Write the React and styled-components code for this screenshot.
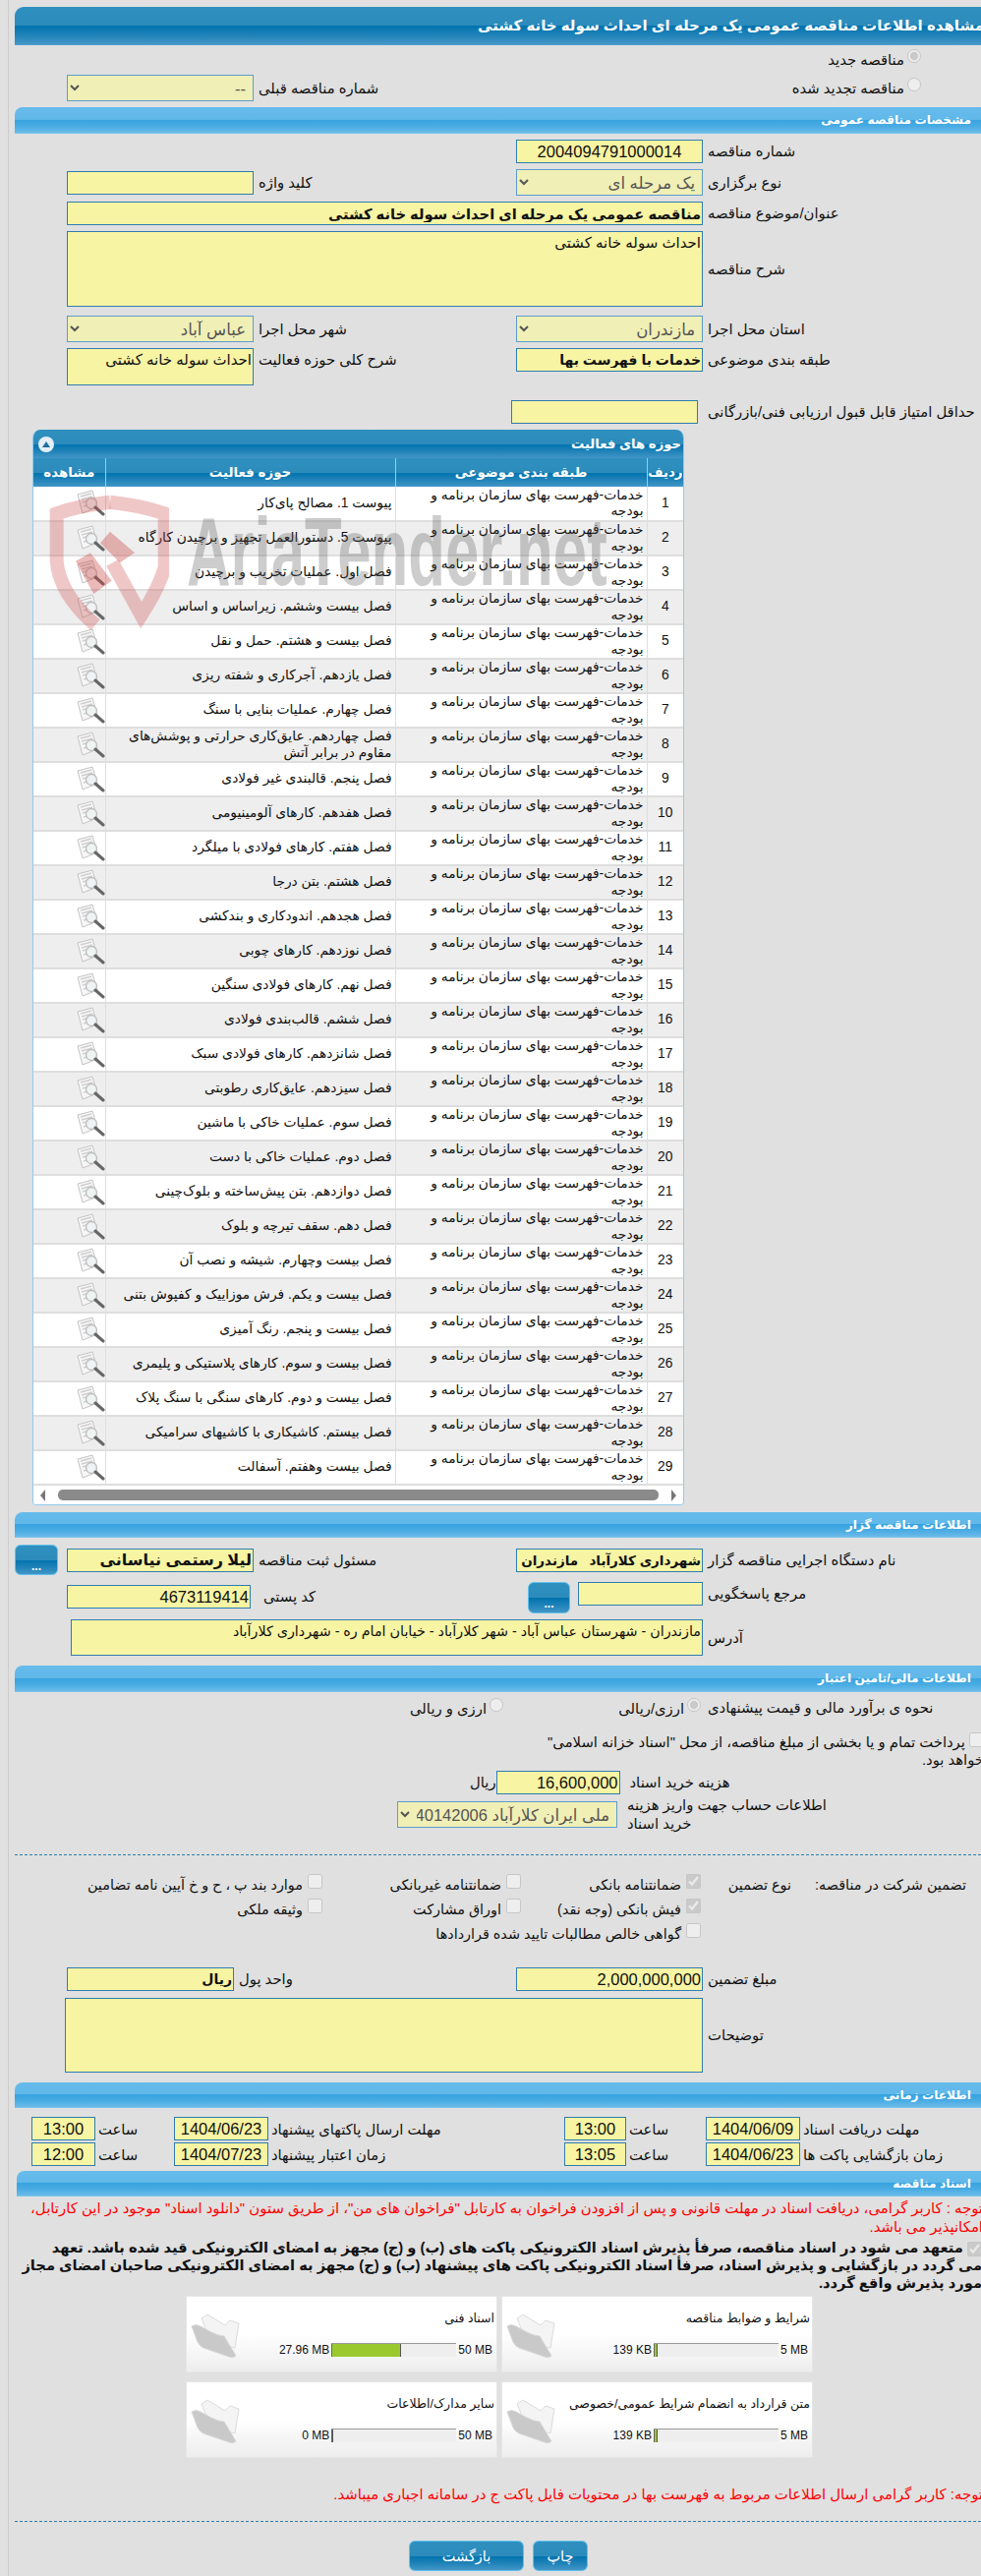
import styled, { createGlobalStyle } from 'styled-components'

const GlobalStyle = createGlobalStyle`
    html, body {
        margin: 0;
        padding: 0;
        background: #e0e0e0;
    }
    body {
        font-family: "Liberation Sans", "DejaVu Sans", sans-serif;
        font-size: 13px;
        color: #111;
        overflow: hidden;
    }
    * {
        box-sizing: border-box;
    }
`

const darkGradient = 'linear-gradient(to bottom, #2f90c0 0%, #2c8bbb 50%, #0073ae 51%, #1f82b8 75%, #4296c6 100%)'
const lightGradient = 'linear-gradient(to bottom, #66bbea 0%, #60b8e9 48%, #38a3e0 50%, #4aace3 75%, #6bbbe9 100%)'

const Page = styled.div`
    width: 998px;
    height: 2620px;
    overflow: hidden;
    position: relative;
`

const Rule = styled.div`
    position: absolute;
    left: 8px;
    top: 0;
    bottom: 0;
    width: 1px;
    background: #cdcdcd;
`

const Content = styled.div`
    margin-left: 15px;
    width: 983px;
    padding-top: 7px;
`

const MainHeader = styled.div`
    height: 39px;
    background: ${darkGradient};
    border-top-left-radius: 9px;
    border-bottom: 1px solid #4f9fd0;
    color: #fff;
    font-weight: bold;
    font-size: 15px;
    line-height: 38px;
    direction: rtl;
    white-space: nowrap;
    overflow: hidden;
    span {
        margin-right: -3px;
    }
`

const SectionHeader = styled.div`
    height: ${props => props.$height || 27}px;
    margin-top: ${props => props.$mt || 0}px;
    margin-left: ${props => props.$ml || 0}px;
    background: ${lightGradient};
    border-top-left-radius: 8px;
    border-bottom: 1px solid #7cc4ec;
    color: #fff;
    font-weight: bold;
    font-size: 12.2px;
    line-height: 26px;
    direction: rtl;
    padding-right: 10px;
`

const FieldRow = styled.div`
    display: grid;
    grid-template-columns: 53px 190px 267px 190px 1fr;
    align-items: ${props => props.$align || 'start'};
    margin-top: ${props => props.$mt || 0}px;
    min-height: ${props => props.$height || 0}px;
`

const Gutter = styled.div`
    min-width: 0;
`

const Label = styled.div`
    direction: rtl;
    text-align: left;
    padding-left: ${props => props.$pl ?? 5}px;
    padding-top: ${props => props.$pt ?? 0}px;
    margin-left: ${props => props.$ml || 0}px;
    margin-top: ${props => props.$mt || 0}px;
    width: ${props => props.$width ? props.$width + 'px' : 'auto'};
    font-size: 14.8px;
    line-height: ${props => props.$lh || 24}px;
    white-space: ${props => props.$wrap ? 'normal' : 'nowrap'};
    align-self: ${props => props.$self || 'auto'};
`

const Box = styled.input`
    display: block;
    width: ${props => props.$width ? props.$width + 'px' : '100%'};
    height: ${props => props.$height || 24}px;
    margin: ${props => props.$margin || 0};
    padding: 0 1px;
    background: #f7f4a3;
    border: 1px solid #2f7db0;
    border-radius: 0;
    outline: none;
    direction: rtl;
    color: #111;
    font-family: inherit;
    font-size: ${props => props.$size || 16.5}px;
    font-weight: ${props => props.$bold ? 'bold' : 'normal'};
    text-align: ${props => props.$center ? 'center' : 'right'};
`

const Area = styled.textarea`
    display: block;
    width: ${props => props.$width ? props.$width + 'px' : '100%'};
    height: ${props => props.$height}px;
    margin: ${props => props.$margin || 0};
    padding: 1px;
    background: #f7f4a3;
    border: 1px solid #2f7db0;
    border-radius: 0;
    outline: none;
    resize: none;
    overflow: hidden;
    direction: rtl;
    color: #111;
    font-family: inherit;
    font-size: ${props => props.$size || 15}px;
    line-height: 20px;
`

const Choice = styled.select`
    display: block;
    width: ${props => props.$width ? props.$width + 'px' : '100%'};
    height: 27px;
    padding: 0 3px;
    background-color: #f0efb5;
    border: 1px solid #5c9dcb;
    border-radius: 0;
    outline: none;
    direction: rtl;
    color: #555;
    opacity: 1;
    font-family: inherit;
    font-size: 16.5px;
`

const Wide = styled.div`
    grid-column: 2 / 5;
    min-width: 0;
`

const SideBySide = styled.div`
    display: flex;
    justify-content: flex-end;
    align-items: flex-start;
    gap: 8px;
    margin-left: ${props => props.$ml || 0}px;
`

const RadioCell = styled.label`
    display: flex;
    direction: rtl;
    align-items: flex-start;
    gap: 3px;
    width: ${props => props.$width ? props.$width + 'px' : 'auto'};
    font-size: 14.8px;
    line-height: 22px;
    white-space: nowrap;
`

const Radio = styled.input.attrs({ type: 'radio' })`
    width: 14px;
    height: 14px;
    margin: 0;
    flex: none;
`

const Tick = styled.input.attrs({ type: 'checkbox' })`
    width: 15px;
    height: 15px;
    margin: 0;
    flex: none;
`

const RightAligned = styled.div`
    width: 222px;
`

const RadioGroup = styled.div`
    grid-column: 2 / 5;
    display: flex;
    direction: rtl;
    padding-right: 2px;
`

const TableWrap = styled.div`
    position: relative;
    margin: 6px 0 0 18px;
    width: 663px;
    background: #fff;
    border: 1px solid #8fcbec;
    border-top: 0;
    border-radius: 8px 8px 4px 4px;
    overflow: hidden;
`

const TableTitle = styled.div`
    display: flex;
    direction: rtl;
    align-items: center;
    justify-content: space-between;
    height: 29px;
    padding: 0 2px 0 5px;
    background: ${darkGradient};
    color: #fff;
    font-weight: bold;
    font-size: 13.2px;
`

const Collapse = styled.span`
    display: flex;
    align-items: center;
    justify-content: center;
    width: 16px;
    height: 16px;
    border-radius: 50%;
    background: #e4eef6;
`

const Grid = styled.table`
    width: 100%;
    table-layout: fixed;
    border-collapse: collapse;
    direction: rtl;
`

const HeadCell = styled.th`
    width: ${props => props.$width ? props.$width + 'px' : 'auto'};
    height: 29px;
    padding: 0;
    background: ${darkGradient};
    border-left: 1px solid #8fd0f0;
    color: #fff;
    font-size: 13.4px;
    font-weight: bold;
    &:last-child {
        border-left: 0;
    }
`

const BodyRow = styled.tr`
    height: 35px;
    background: ${props => props.$odd ? '#fff' : '#eee'};
    border-bottom: 2px solid #dedede;
`

const Cell = styled.td`
    padding: 0 ${props => props.$pr ?? 3}px 0 3px;
    border-left: 1px solid #dedede;
    font-size: 13.8px;
    line-height: 16.5px;
    text-align: ${props => props.$center ? 'center' : 'right'};
    overflow: hidden;
    &:last-child {
        border-left: 0;
    }
`

const Mark = styled.svg`
    display: block;
    margin-left: auto;
    margin-right: 0;
`

const Watermark = styled.div`
    position: absolute;
    left: 3px;
    top: 57px;
    width: 630px;
    height: 150px;
    pointer-events: none;
`

const WatermarkText = styled.div`
    position: absolute;
    left: 153px;
    top: 12px;
    font-family: "Liberation Sans", sans-serif;
    font-size: 98px;
    font-weight: bold;
    line-height: 110px;
    white-space: nowrap;
    color: rgba(90, 90, 90, 0.3);
    transform: scaleX(0.63);
    transform-origin: left top;
`

const ScrollBar = styled.div`
    display: flex;
    align-items: center;
    justify-content: space-between;
    height: 19px;
    padding: 0 7px;
    background: #fff;
`

const Arrow = styled.span`
    width: 0;
    height: 0;
    border-top: 6px solid transparent;
    border-bottom: 6px solid transparent;
    border-right: ${props => props.$left ? '5px solid #777' : '0'};
    border-left: ${props => props.$left ? '0' : '5px solid #777'};
`

const Thumb = styled.span`
    width: 611px;
    height: 11px;
    border-radius: 5px;
    background: #8a8a8a;
`

const DotButton = styled.button`
    display: block;
    width: ${props => props.$width || 44}px;
    height: ${props => props.$height || 31}px;
    padding: ${props => props.$dots ? '12px 0 0' : '0'};
    background: ${darkGradient};
    border: 1px solid #62c0ec;
    border-radius: 6px;
    color: #fff;
    font-family: inherit;
    font-size: ${props => props.$dots ? 12 : 14.5}px;
    font-weight: ${props => props.$dots ? 'bold' : 'normal'};
`

const PayNote = styled.div`
    width: 465px;
    margin: 13px -3px 0 auto;
    direction: rtl;
    font-size: 14.8px;
    line-height: 18px;
`

const CostRow = styled.div`
    display: flex;
    align-items: flex-start;
    margin: ${props => props.$mt || 0}px 0 0 ${props => props.$ml || 0}px;
`

const Dashed = styled.div`
    margin-top: ${props => props.$mt}px;
    border-top: 1px dashed #2f7db0;
`

const GuaranteeRow = styled.div`
    display: grid;
    grid-template-columns: 178px 92px 183px 202px 1fr;
    direction: rtl;
    height: 25px;
    padding-right: 15px;
    margin-top: ${props => props.$mt || 0}px;
    font-size: 14.4px;
    line-height: 22px;
    white-space: nowrap;
`

const Option = styled.label`
    display: flex;
    align-items: flex-start;
    gap: 5px;
`

const TimeRow = styled.div`
    display: flex;
    align-items: center;
    margin: ${props => props.$mt}px 0 0 17px;
`

const TimeLabel = styled.div`
    width: ${props => props.$width}px;
    direction: rtl;
    text-align: left;
    padding-left: 3px;
    font-size: 14.8px;
    white-space: nowrap;
`

const Notice = styled.div`
    margin: ${props => props.$mt || 0}px -2px 0 ${props => props.$ml || 0}px;
    direction: rtl;
    font-size: 14.9px;
    line-height: 19px;
    color: #f00;
`

const Pledge = styled.div`
    margin: 2px -1px 0 0;
    direction: rtl;
    font-size: 14.7px;
    font-weight: bold;
    line-height: 18px;
    white-space: nowrap;
    color: #111;
    input {
        vertical-align: middle;
        margin-left: 0;
    }
`

const Cards = styled.div`
    display: grid;
    grid-template-columns: 317px 317px;
    grid-auto-rows: 78px;
    gap: 9px 4px;
    direction: rtl;
    margin: 4px 0 0 174px;
    width: 638px;
`

const Card = styled.div`
    display: flex;
    background: linear-gradient(to bottom, #fff 0%, #fff 50%, #ededed 100%);
    border: 1px solid #e6e6e6;
`

const CardBody = styled.div`
    flex: 1;
    min-width: 0;
    padding: 13px 2px 0 0;
`

const CardTitle = styled.div`
    height: 18px;
    font-size: 12.5px;
    line-height: 18px;
    white-space: nowrap;
`

const Meter = styled.div`
    display: flex;
    direction: ltr;
    justify-content: flex-end;
    align-items: center;
    gap: 2px;
    margin-top: 16px;
    padding-right: 2px;
    font-size: 12px;
    white-space: nowrap;
`

const Bar = styled.div`
    width: 127px;
    height: 14px;
    background: #eeeeee;
    border-top: 1px solid #999;
`

const Fill = styled.div`
    height: 100%;
    background: #9ac92e;
    border-left: 1px solid #666;
    border-right: 1px solid #555;
`

const Folder = styled.svg`
    flex: none;
    margin: 16px 0 0 3px;
`

const Actions = styled.div`
    display: flex;
    gap: 9px;
    margin: 19px 0 0 401px;
`

const ViewIcon = () => <Mark width="30" height="28" viewBox="0 0 30 28">
    <path d="M2 5 L17 1 L22 18 L7 24 Z" fill="#f7f7f7" stroke="#c4c4c4" />
    <path d="M5 7 L16 4 M6 10 L17 7 M7 13 L14 11 M8 17 L12 16" stroke="#cfcfcf" strokeWidth="1.4" />
    <circle cx="16" cy="14" r="5.5" fill="#eef1f2" fillOpacity="0.8" stroke="#bdbdbd" strokeWidth="1.3" />
    <path d="M20 18 L28 25" stroke="#666" strokeWidth="3" strokeLinecap="round" />
</Mark>

const FolderIcon = () => <Folder width="54" height="48" viewBox="0 0 54 48">
    <path d="M12 6 L18 2 L36 13 L41 8 L50 11 L46 36 L22 30 Z" fill="#f4f4f4" stroke="#dcdcdc" />
    <path d="M2 14 Q6 11 11 14 L22 20 Q30 24 35 24 L47 44 Q44 47 40 45 L14 36 Q10 34 8 30 Z" fill="#c9c9c9" stroke="#d8d8d8" />
</Folder>

const activities = [
    'پیوست 1. مصالح پای‌کار',
    'پیوست 5. دستورالعمل تجهیز و برچیدن کارگاه',
    'فصل اول. عملیات تخریب و برچیدن',
    'فصل بیست وششم. زیراساس و اساس',
    'فصل بیست و هشتم. حمل و نقل',
    'فصل یازدهم. آجرکاری و شفته ریزی',
    'فصل چهارم. عملیات بنایی با سنگ',
    'فصل چهاردهم. عایق‌کاری حرارتی و پوشش‌های مقاوم در برابر آتش',
    'فصل پنجم. قالبندی غیر فولادی',
    'فصل هفدهم. کارهای آلومینیومی',
    'فصل هفتم. کارهای فولادی با میلگرد',
    'فصل هشتم. بتن درجا',
    'فصل هجدهم. اندودکاری و بندکشی',
    'فصل نوزدهم. کارهای چوبی',
    'فصل نهم. کارهای فولادی سنگین',
    'فصل ششم. قالب‌بندی فولادی',
    'فصل شانزدهم. کارهای فولادی سبک',
    'فصل سیزدهم. عایق‌کاری رطوبتی',
    'فصل سوم. عملیات خاکی با ماشین',
    'فصل دوم. عملیات خاکی با دست',
    'فصل دوازدهم. بتن پیش‌ساخته و بلوک‌چینی',
    'فصل دهم. سقف تیرچه و بلوک',
    'فصل بیست وچهارم. شیشه و نصب آن',
    'فصل بیست و یکم. فرش موزاییک و کفپوش بتنی',
    'فصل بیست و پنجم. رنگ آمیزی',
    'فصل بیست و سوم. کارهای پلاستیکی و پلیمری',
    'فصل بیست و دوم. کارهای سنگی با سنگ پلاک',
    'فصل بیستم. کاشیکاری با کاشیهای سرامیکی',
    'فصل بیست وهفتم. آسفالت',
]

const files = [
    { title: 'شرایط و ضوابط مناقصه', used: '139 KB', max: '5 MB', pct: 2.8 },
    { title: 'اسناد فنی', used: '27.96 MB', max: '50 MB', pct: 55.9 },
    { title: 'متن قرارداد به انضمام شرایط عمومی/خصوصی', used: '139 KB', max: '5 MB', pct: 2.8 },
    { title: 'سایر مدارک/اطلاعات', used: '0 MB', max: '50 MB', pct: 0 },
]

const App = () => {
    return <Page>
        <GlobalStyle />
        <Rule />
        <Content>
            <MainHeader><span>مشاهده اطلاعات مناقصه عمومی یک مرحله ای احداث سوله خانه کشتی</span></MainHeader>

            <FieldRow $height={30} $align="center">
                <Gutter /><Gutter /><Gutter /><Gutter />
                <RightAligned><RadioCell><Radio disabled defaultChecked name="kind" />مناقصه جدید</RadioCell></RightAligned>
            </FieldRow>
            <FieldRow $align="center">
                <Gutter />
                <Choice disabled><option>--</option></Choice>
                <Label>شماره مناقصه قبلی</Label>
                <Gutter />
                <RightAligned><RadioCell><Radio disabled name="kind" />مناقصه تجدید شده</RadioCell></RightAligned>
            </FieldRow>

            <SectionHeader $mt={6}>مشخصات مناقصه عمومی</SectionHeader>

            <FieldRow $mt={6}>
                <Gutter /><Gutter /><Gutter />
                <Box readOnly $center defaultValue="2004094791000014" />
                <Label>شماره مناقصه</Label>
            </FieldRow>
            <FieldRow $mt={6} $align="center">
                <Gutter />
                <Box readOnly />
                <Label>کلید واژه</Label>
                <Choice disabled><option>یک مرحله ای</option></Choice>
                <Label>نوع برگزاری</Label>
            </FieldRow>
            <FieldRow $mt={6}>
                <Gutter />
                <Wide><Box readOnly $bold $size={14.7} defaultValue="مناقصه عمومی یک مرحله ای احداث سوله خانه کشتی" /></Wide>
                <Label>عنوان/موضوع مناقصه</Label>
            </FieldRow>
            <FieldRow $mt={6} $align="center">
                <Gutter />
                <Wide><Area readOnly $height={77} defaultValue="احداث سوله خانه کشتی" /></Wide>
                <Label>شرح مناقصه</Label>
            </FieldRow>
            <FieldRow $mt={9} $align="center">
                <Gutter />
                <Choice disabled><option>عباس آباد</option></Choice>
                <Label>شهر محل اجرا</Label>
                <Choice disabled><option>مازندران</option></Choice>
                <Label>استان محل اجرا</Label>
            </FieldRow>
            <FieldRow $mt={6}>
                <Gutter />
                <Area readOnly $height={38} defaultValue="احداث سوله خانه کشتی" />
                <Label>شرح کلی حوزه فعالیت</Label>
                <Box readOnly $bold $size={14} defaultValue="خدمات با فهرست بها" />
                <Label>طبقه بندی موضوعی</Label>
            </FieldRow>
            <FieldRow $mt={15}>
                <Gutter /><Gutter /><Gutter />
                <Box readOnly $margin="0 0 0 -5px" />
                <Label>حداقل امتیاز قابل قبول ارزیابی فنی/بازرگانی</Label>
            </FieldRow>

            <TableWrap>
                <TableTitle>
                    حوزه های فعالیت
                    <Collapse>
                        <svg width="8" height="6" viewBox="0 0 8 6"><path d="M4 0 L8 6 L0 6 Z" fill="#1f6f9f" /></svg>
                    </Collapse>
                </TableTitle>
                <Grid>
                    <thead>
                        <tr>
                            <HeadCell $width={37}>ردیف</HeadCell>
                            <HeadCell $width={256}>طبقه بندی موضوعی</HeadCell>
                            <HeadCell $width={295}>حوزه فعالیت</HeadCell>
                            <HeadCell>مشاهده</HeadCell>
                        </tr>
                    </thead>
                    <tbody>
                        {activities.map((name, index) => <BodyRow key={index} $odd={index % 2 === 0}>
                            <Cell $center>{index + 1}</Cell>
                            <Cell>خدمات-فهرست بهای سازمان برنامه و بودجه</Cell>
                            <Cell>{name}</Cell>
                            <Cell $pr={0}><ViewIcon /></Cell>
                        </BodyRow>)}
                    </tbody>
                </Grid>
                <ScrollBar><Arrow $left /><Thumb /><Arrow /></ScrollBar>
                <Watermark>
                    <svg width="135" height="150" viewBox="0 0 405 450">
                        <g fill="none" stroke="rgba(205, 70, 70, 0.3)" strokeWidth="42">
                            <path d="M225 50 Q130 60 62 85 L62 230 Q70 330 180 425" />
                            <path d="M225 50 Q320 60 392 85 L392 250 Q370 320 320 395 L232 235" />
                        </g>
                        <path d="M225 140 L300 205 L255 235 L195 175 Z M120 230 L165 205 L230 290 L175 330 Z" fill="rgba(205, 70, 70, 0.38)" />
                    </svg>
                    <WatermarkText>AriaTender.net</WatermarkText>
                </Watermark>
            </TableWrap>

            <SectionHeader $mt={7} $height={26}>اطلاعات مناقصه گزار</SectionHeader>

            <FieldRow $mt={7} $align="center">
                <Gutter><DotButton $dots>...</DotButton></Gutter>
                <Box readOnly $bold $size={16} defaultValue="لیلا رستمی نیاسانی" />
                <Label>مسئول ثبت مناقصه</Label>
                <Box readOnly $bold $size={13.5} defaultValue="شهرداری کلارآباد   مازندران" />
                <Label>نام دستگاه اجرایی مناقصه گزار</Label>
            </FieldRow>
            <FieldRow $mt={7}>
                <Gutter />
                <Box readOnly $width={187} $margin="3px 0 0" defaultValue="4673119414" />
                <Label $pl={10} $pt={3} $self="start">کد پستی</Label>
                <SideBySide $ml={-69}>
                    <DotButton $dots $width={43} $height={32}>...</DotButton>
                    <Box readOnly $width={127} />
                </SideBySide>
                <Label>مرجع پاسخگویی</Label>
            </FieldRow>
            <FieldRow $mt={6} $align="center">
                <Gutter />
                <Wide><Area readOnly $height={37} $size={14.3} $margin="0 0 0 4px" $width={643} defaultValue="مازندران - شهرستان عباس آباد - شهر کلارآباد - خیابان امام ره - شهرداری کلارآباد" /></Wide>
                <Label>آدرس</Label>
            </FieldRow>

            <SectionHeader $mt={10}>اطلاعات مالی/تامین اعتبار</SectionHeader>

            <FieldRow $mt={6} $height={20}>
                <Gutter />
                <RadioGroup>
                    <RadioCell $width={201}><Radio disabled defaultChecked name="money" />ارزی/ریالی</RadioCell>
                    <RadioCell><Radio disabled name="money" />ارزی و ریالی</RadioCell>
                </RadioGroup>
                <Label $lh={20}>نحوه ی برآورد مالی و قیمت پیشنهادی</Label>
            </FieldRow>

            <PayNote>
                <Tick disabled /> پرداخت تمام و یا بخشی از مبلغ مناقصه، از محل "اسناد خزانه اسلامی" خواهد بود.
            </PayNote>

            <CostRow $mt={2} $ml={463}>
                <Label $pl={0}>ریال</Label>
                <Box readOnly $width={126} defaultValue="16,600,000" />
                <Label $pl={10}>هزینه خرید اسناد</Label>
            </CostRow>
            <CostRow $mt={7} $ml={389}>
                <Choice disabled $width={224}><option>ملی ایران کلارآباد 40142006</option></Choice>
                <Label $pl={10} $mt={-5} $lh={19} $wrap $width={215}>اطلاعات حساب جهت واریز هزینه خرید اسناد</Label>
            </CostRow>

            <Dashed $mt={21} />

            <GuaranteeRow $mt={19}>
                <span>تضمین شرکت در مناقصه:</span>
                <span>نوع تضمین</span>
                <Option><Tick disabled defaultChecked />ضمانتنامه بانکی</Option>
                <Option><Tick disabled />ضمانتنامه غیربانکی</Option>
                <Option><Tick disabled />موارد بند پ ، ح و خ آیین نامه تضامین</Option>
            </GuaranteeRow>
            <GuaranteeRow>
                <span /><span />
                <Option><Tick disabled defaultChecked />فیش بانکی (وجه نقد)</Option>
                <Option><Tick disabled />اوراق مشارکت</Option>
                <Option><Tick disabled />وثیقه ملکی</Option>
            </GuaranteeRow>
            <GuaranteeRow>
                <span /><span />
                <Option><Tick disabled />گواهی خالص مطالبات تایید شده قراردادها</Option>
            </GuaranteeRow>

            <FieldRow $mt={20}>
                <Gutter />
                <Box readOnly $width={170} $bold $size={14} defaultValue="ریال" />
                <Label $pl={0} $ml={-15}>واحد پول</Label>
                <Box readOnly defaultValue="2,000,000,000" />
                <Label>مبلغ تضمین</Label>
            </FieldRow>
            <FieldRow $mt={7} $align="center">
                <Gutter />
                <Wide><Area readOnly $height={76} $width={649} $margin="0 0 0 -2px" /></Wide>
                <Label>توضیحات</Label>
            </FieldRow>

            <SectionHeader $mt={10} $height={26}>اطلاعات زمانی</SectionHeader>

            <TimeRow $mt={9}>
                <Box readOnly $width={65} $center defaultValue="13:00" />
                <TimeLabel $width={80}>ساعت</TimeLabel>
                <Box readOnly $width={96} $center defaultValue="1404/06/23" />
                <TimeLabel $width={301}>مهلت ارسال پاکتهای پیشنهاد</TimeLabel>
                <Box readOnly $width={63} $center defaultValue="13:00" />
                <TimeLabel $width={81}>ساعت</TimeLabel>
                <Box readOnly $width={96} $center defaultValue="1404/06/09" />
                <TimeLabel $width={150}>مهلت دریافت اسناد</TimeLabel>
            </TimeRow>
            <TimeRow $mt={2}>
                <Box readOnly $width={65} $center defaultValue="12:00" />
                <TimeLabel $width={80}>ساعت</TimeLabel>
                <Box readOnly $width={96} $center defaultValue="1404/07/23" />
                <TimeLabel $width={301}>زمان اعتبار پیشنهاد</TimeLabel>
                <Box readOnly $width={63} $center defaultValue="13:05" />
                <TimeLabel $width={81}>ساعت</TimeLabel>
                <Box readOnly $width={96} $center defaultValue="1404/06/23" />
                <TimeLabel $width={150}>زمان بازگشایی پاکت ها</TimeLabel>
            </TimeRow>

            <SectionHeader $mt={5} $ml={2} $height={26}>اسناد مناقصه</SectionHeader>

            <Notice $mt={3}>توجه : کاربر گرامی، دریافت اسناد در مهلت قانونی و پس از افزودن فراخوان به کارتابل "فراخوان های من"، از طریق ستون "دانلود اسناد" موجود در این کارتابل، امکانپذیر می باشد.</Notice>

            <Pledge>
                <Tick disabled defaultChecked /> متعهد می شود در اسناد مناقصه، صرفأ پذیرش اسناد الکترونیکی پاکت های (ب) و (ج) مجهز به امضای الکترونیکی قید شده باشد. تعهد
                <br />
                می گردد در بازگشایی و پذیرش اسناد، صرفأ اسناد الکترونیکی پاکت های پیشنهاد (ب) و (ج) مجهز به امضای الکترونیکی صاحبان امضای مجاز
                <br />
                مورد پذیرش واقع گردد.
            </Pledge>

            <Cards>
                {files.map((file, index) => <Card key={index}>
                    <CardBody>
                        <CardTitle>{file.title}</CardTitle>
                        <Meter>
                            {file.used}
                            <Bar><Fill style={{ width: `${file.pct}%` }} /></Bar>
                            {file.max}
                        </Meter>
                    </CardBody>
                    <FolderIcon />
                </Card>)}
            </Cards>

            <Notice $mt={28}>توجه: کاربر گرامی ارسال اطلاعات مربوط به فهرست بها در محتویات فایل پاکت ج در سامانه اجباری میباشد.</Notice>

            <Dashed $mt={17} />

            <Actions>
                <DotButton $width={117}>بازگشت</DotButton>
                <DotButton $width={56}>چاپ</DotButton>
            </Actions>
        </Content>
    </Page>
}

export default App
